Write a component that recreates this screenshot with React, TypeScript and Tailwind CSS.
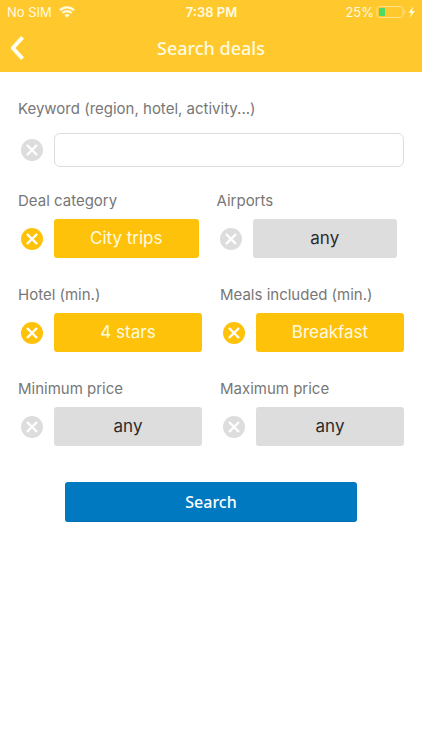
import { useState, type FormEvent, type ReactNode } from 'react'

type FilterKey = 'category' | 'airports' | 'hotel' | 'meals' | 'minPrice' | 'maxPrice'

const ANY = 'any'

const initialFilters: Record<FilterKey, string> = {
  category: 'City trips',
  airports: ANY,
  hotel: '4 stars',
  meals: 'Breakfast',
  minPrice: ANY,
  maxPrice: ANY,
}

const labelClasses = 'block whitespace-nowrap text-[15px] leading-6 text-[#777777]'

function StatusBar() {
  return (
    <div className="grid h-6 grid-cols-3 items-center pr-[6px] pl-[7px] text-[13px] leading-6 text-[#fffbe0]">
      <div className="flex items-center gap-[7px]">
        <span>No SIM</span>
        <svg viewBox="0 0 16 12" className="h-3 w-4" fill="none" stroke="currentColor" strokeWidth="2.3">
          <path d="M1 4.3C5 .4 11 .4 15 4.3" />
          <path d="M3.4 7c2.6-2.5 6.6-2.5 9.2 0" />
          <path d="M8 11.7 5.4 9.1c1.4-1.4 3.8-1.4 5.2 0Z" fill="currentColor" stroke="none" />
        </svg>
      </div>
      <span className="text-center font-semibold">7:38 PM</span>
      <div className="flex items-center justify-end">
        <span>25%</span>
        <svg viewBox="0 0 40 14" className="ml-[2px] h-[14px] w-10 shrink-0">
          <rect x="1" y="1.5" width="26" height="11" rx="2.5" fill="none" stroke="#ffe28a" strokeWidth="1" />
          <rect x="3" y="3" width="6" height="8" rx="0.8" fill="#4cd964" />
          <path d="M28.3 5v4c1.5-.6 1.5-3.4 0-4Z" fill="#ffe28a" />
          <path d="m37.4 1.4-5 6.4h2.9l-1.5 4.8 5.2-6.6h-3Z" fill="currentColor" />
        </svg>
      </div>
    </div>
  )
}

function ClearButton({ label, active, onClick }: { label: string; active: boolean; onClick: () => void }) {
  return (
    <button
      type="button"
      aria-label={`Clear ${label}`}
      onClick={onClick}
      className={`mr-2 flex w-7 shrink-0 justify-center ${active ? 'text-[#ffc20a]' : 'text-[#dddddd]'}`}
    >
      <svg viewBox="0 0 22 22" className="size-[22px]">
        <circle cx="11" cy="11" r="11" fill="currentColor" />
        <path d="m6 6 10 10m0-10L6 16" stroke="#ffffff" strokeWidth="2.4" />
      </svg>
    </button>
  )
}

function FilterRow({ children, className = '' }: { children: ReactNode; className?: string }) {
  return <div className={`grid grid-cols-2 gap-[18px] ${className}`}>{children}</div>
}

type FilterProps = {
  id: FilterKey
  label: string
  value: string
  onClear: (id: FilterKey) => void
}

function Filter({ id, label, value, onClear }: FilterProps) {
  const active = value !== ANY

  return (
    <div className="min-w-0">
      <label htmlFor={id} className={labelClasses}>
        {label}
      </label>
      <div className="mt-[6px] flex items-center">
        <ClearButton label={label} active={active} onClick={() => onClear(id)} />
        <button
          id={id}
          type="button"
          className={`h-[39px] min-w-0 flex-1 rounded-[3px] text-[17px] leading-[27px] ${
            active ? 'bg-[#ffc20a] text-[#fffbe0]' : 'bg-[#dddddd] text-[#2b2b2b]'
          }`}
        >
          {value}
        </button>
      </div>
    </div>
  )
}

export default function App() {
  const [keyword, setKeyword] = useState('')
  const [filters, setFilters] = useState(initialFilters)

  function clearFilter(id: FilterKey) {
    setFilters((prev) => ({ ...prev, [id]: ANY }))
  }

  function handleSubmit(event: FormEvent<HTMLFormElement>) {
    event.preventDefault()
  }

  return (
    <div className="min-h-screen bg-white font-['Inter',sans-serif]">
      <header className="bg-[#ffc82c]">
        <StatusBar />
        <div className="grid h-12 grid-cols-[40px_1fr_40px] items-center">
          <button type="button" aria-label="Back" className="pl-[10px] text-[#fffef5]">
            <svg viewBox="0 0 14 24" className="h-6 w-[14px]" fill="none" stroke="currentColor" strokeWidth="4">
              <path d="M12.6 1.4 2.8 12l9.8 10.6" strokeLinejoin="round" />
            </svg>
          </button>
          <h1 className="text-center font-['Noto_Sans',sans-serif] text-lg leading-6 font-medium text-[#fffbe0]">
            Search deals
          </h1>
        </div>
      </header>

      <form onSubmit={handleSubmit} className="px-[18px] pt-[25px]">
        <label htmlFor="keyword" className={labelClasses}>
          Keyword (region, hotel, activity...)
        </label>
        <div className="mt-3 flex items-center">
          <ClearButton label="keyword" active={keyword !== ''} onClick={() => setKeyword('')} />
          <input
            id="keyword"
            type="text"
            value={keyword}
            onChange={(event) => setKeyword(event.target.value)}
            className="h-[34px] min-w-0 flex-1 rounded-md border border-[#dddddd] px-2 text-[15px]"
          />
        </div>

        <div className="mt-[22px] flex flex-col gap-[25px]">
          <FilterRow className="pr-[7px]">
            <Filter id="category" label="Deal category" value={filters.category} onClear={clearFilter} />
            <Filter id="airports" label="Airports" value={filters.airports} onClear={clearFilter} />
          </FilterRow>
          <FilterRow>
            <Filter id="hotel" label="Hotel (min.)" value={filters.hotel} onClear={clearFilter} />
            <Filter id="meals" label="Meals included (min.)" value={filters.meals} onClear={clearFilter} />
          </FilterRow>
          <FilterRow>
            <Filter id="minPrice" label="Minimum price" value={filters.minPrice} onClear={clearFilter} />
            <Filter id="maxPrice" label="Maximum price" value={filters.maxPrice} onClear={clearFilter} />
          </FilterRow>
        </div>

        <div className="mt-9 px-[47px]">
          <button
            type="submit"
            className="h-10 w-full rounded-[3px] border-b border-[#0070b3] bg-[#0079c1] font-['Noto_Sans',sans-serif] text-base font-medium text-white"
          >
            Search
          </button>
        </div>
      </form>
    </div>
  )
}
